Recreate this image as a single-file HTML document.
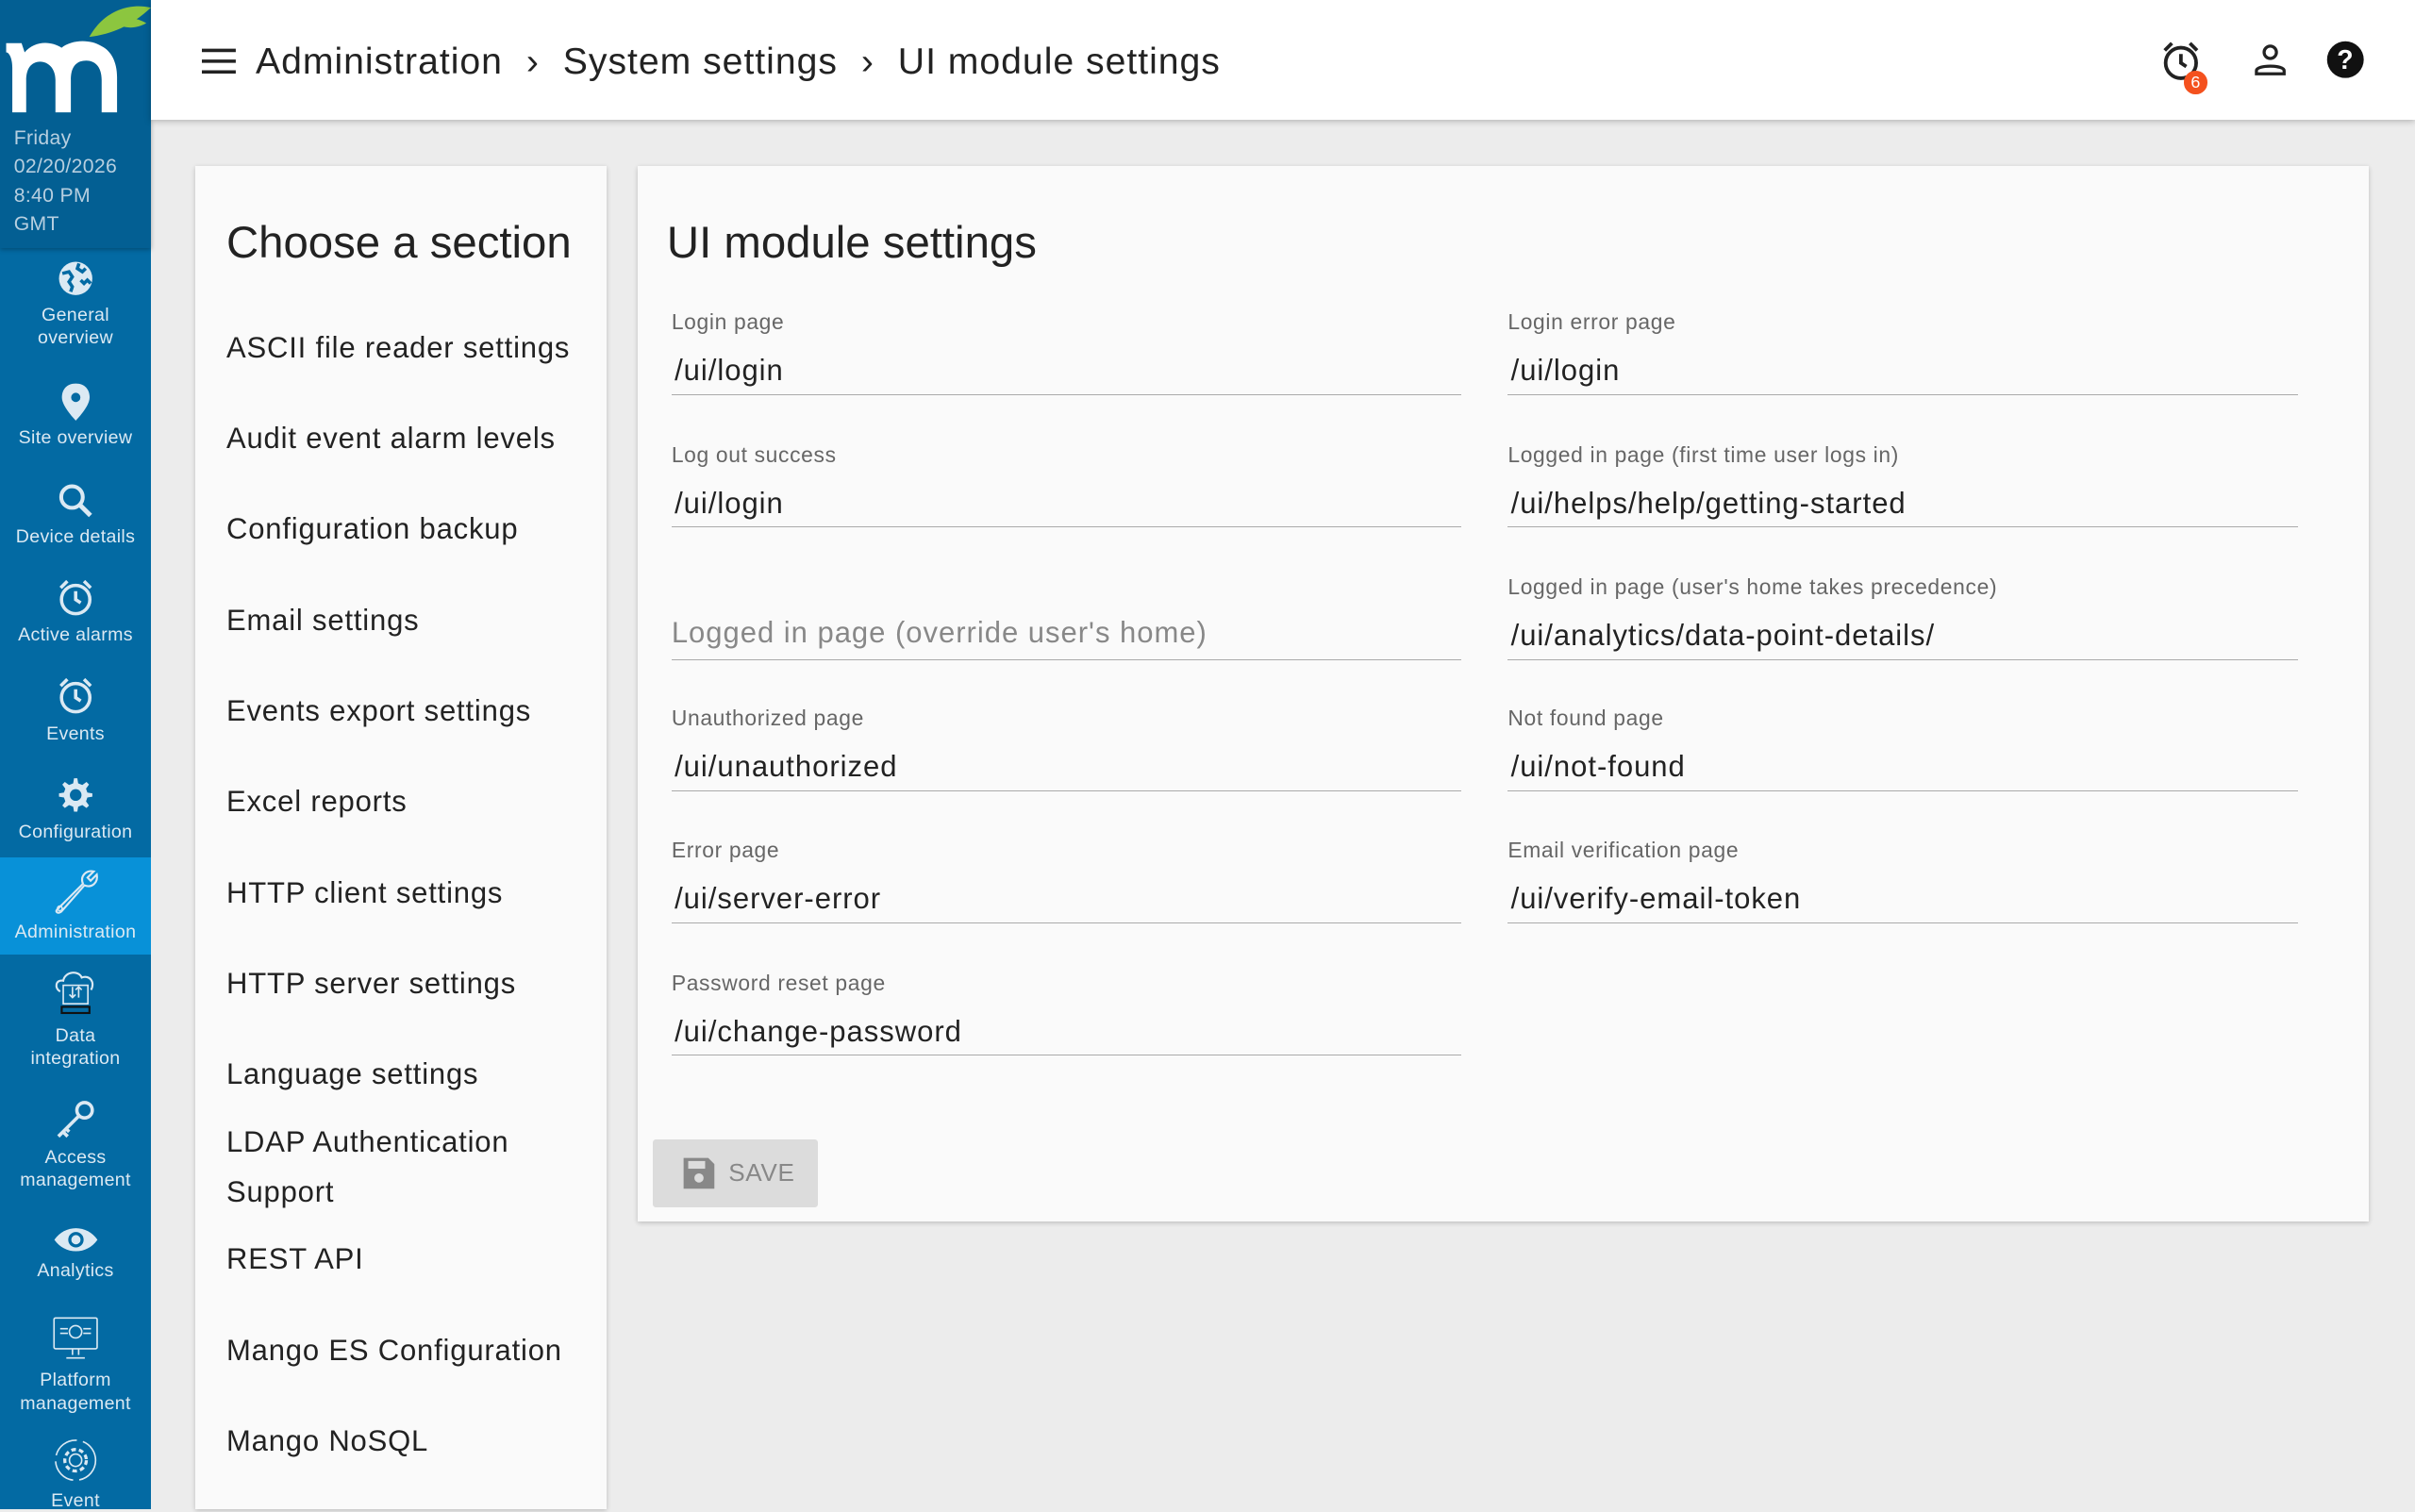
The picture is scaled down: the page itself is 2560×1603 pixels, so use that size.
<!DOCTYPE html>
<html><head><meta charset="utf-8"><style>
html{zoom:1.63265}
body{margin:0;width:1568px;height:980px;overflow:hidden;background:#ececec;font-family:"Liberation Sans",sans-serif;position:relative;color:#222;letter-spacing:.4px}
.sb{position:absolute;left:0;top:0;width:98px;height:980px;background:#036aa3;color:#dbe9f3;letter-spacing:.2px}
.sbtop{height:161px;background:#035f93;position:relative;box-shadow:0 1px 3px rgba(0,0,0,.3)}
.dt{position:absolute;left:9px;top:81px;font-size:13px;line-height:18.5px;color:#b7cfe0}
.it{position:absolute;left:0;width:98px;text-align:center;font-size:12px;line-height:15px}
.it svg{display:block;margin:0 auto 3px}
.act{background:#0891d8}
.hdr{position:absolute;left:98px;top:0;right:0;height:78px;background:#fff;box-shadow:0 1px 4px rgba(0,0,0,.25)}
.crumb{position:absolute;left:68px;top:27px;font-size:24px;color:#222;letter-spacing:.6px}
.left{position:absolute;left:127px;top:108px;width:267px;height:872px;background:#fafafa;box-shadow:0 1px 3px rgba(0,0,0,.2)}
.left h2{font-weight:normal;font-size:29px;margin:0;position:absolute;left:20px;top:33px;letter-spacing:0}
.left .l{position:absolute;left:20px;font-size:19px;line-height:32px;letter-spacing:.5px}
.main{position:absolute;left:414px;top:108px;width:1124px;height:685px;background:#fafafa;box-shadow:0 1px 3px rgba(0,0,0,.2)}
.main h2{font-weight:normal;font-size:29px;margin:0;position:absolute;left:19px;top:33px;letter-spacing:0}
.f{position:absolute;width:513px;border-bottom:1px solid #aaa;height:55px}
.f .lb{position:absolute;left:0;top:0;font-size:14px;color:#666}
.f .v{position:absolute;left:2px;top:29px;font-size:19px;color:#222;letter-spacing:.6px}
.f .ph{position:absolute;left:0;top:29px;font-size:19px;color:#888;letter-spacing:.6px}
.save{position:absolute;left:10px;top:632px;width:107px;height:44px;background:#dcdcdc;color:#888;font-size:16px;line-height:44px;border-radius:2px}
</style></head><body>
<div class="sb">
 <div class="sbtop">
  <svg width="98" height="80" style="position:absolute;left:0;top:0">
   <path d="M98 5 C85 2 68 6 58 24 C74 22 86 16 98 5Z" fill="#8cc63f"/>
   <path d="M74 14 C82 10 90 12 95 15 C88 19 80 19 74 14Z" fill="#8cc63f"/>
   <path d="M4 28 L14 28 L16 34 C22 27 32 26 40 31 C46 26 58 25 66 30 C72 33 76 40 76 50 L76 73 L66 73 L66 52 C66 40 58 38 52 40 C47 42 46 47 46 52 L46 73 L36 73 L36 52 C36 42 28 38 22 41 C18 43 17 48 17 52 L17 73 L8 73 L8 44 C8 38 6 34 4 34Z" fill="#fff"/>
  </svg>
  <div class="dt">Friday<br>02/20/2026<br>8:40 PM<br>GMT</div>
 </div>
 <div class="it" style="top:168px"><svg width="26" height="26" viewBox="0 0 24 24"><circle cx="12" cy="12" r="10" fill="#dbe9f3"/><path d="M4 9 L8 8 L10 11 L8 14 L10 17 L9 20 M14 3 L13 6 L16 8 L18 6 M15 13 L17 15 L19 13 L21 15" stroke="#036aa3" stroke-width="2" fill="none"/></svg>General<br>overview</div>
 <div class="it" style="top:248px"><svg width="20" height="26" viewBox="0 0 20 26"><path d="M10 1 C4 1 1 5 1 10 C1 16 10 25 10 25 C10 25 19 16 19 10 C19 5 16 1 10 1Z" fill="#dbe9f3"/><circle cx="10" cy="10" r="3" fill="#036aa3"/></svg>Site overview</div>
 <div class="it" style="top:312px"><svg width="24" height="26" viewBox="0 0 24 24"><circle cx="10" cy="10" r="7" stroke="#dbe9f3" stroke-width="2.5" fill="none"/><path d="M15 15 L22 22" stroke="#dbe9f3" stroke-width="3"/></svg>Device details</div>
 <div class="it" style="top:374px"><svg width="26" height="28" viewBox="0 0 24 24"><circle cx="12" cy="13" r="8.5" stroke="#dbe9f3" stroke-width="2" fill="none"/><path d="M12 8 V13 L15 15 M3 6 L7 2 M21 6 L17 2" stroke="#dbe9f3" stroke-width="2" fill="none"/></svg>Active alarms</div>
 <div class="it" style="top:438px"><svg width="26" height="28" viewBox="0 0 24 24"><circle cx="12" cy="13" r="8.5" stroke="#dbe9f3" stroke-width="2" fill="none"/><path d="M12 8 V13 L15 15 M3 6 L7 2 M21 6 L17 2" stroke="#dbe9f3" stroke-width="2" fill="none"/></svg>Events</div>
 <div class="it" style="top:502px"><svg width="26" height="28" viewBox="0 0 24 24"><path d="M12 2 L14 2 L14.5 5 L17 6 L19.5 4.2 L21 5.7 L19.2 8.2 L20 10.5 L23 11 L23 13 L20 13.5 L19.2 15.8 L21 18.3 L19.5 19.8 L17 18 L14.5 19 L14 22 L12 22 L11.5 19 L9 18 L6.5 19.8 L5 18.3 L6.8 15.8 L6 13.5 L3 13 L3 11 L6 10.5 L6.8 8.2 L5 5.7 L6.5 4.2 L9 6 L11.5 5Z" fill="#dbe9f3" transform="translate(-1 0)"/><circle cx="12" cy="12" r="3.5" fill="#036aa3"/></svg>Configuration</div>
 <div class="it act" style="top:557px;height:63px;padding-top:6px;box-sizing:border-box"><svg width="34" height="32" viewBox="0 0 34 32"><path d="M6 27 L22 11 C20 6 24 2 29 3 L25 7 L27 9 L31 5 C32 10 28 14 23 12 L8 29 C6 31 3 29 6 27Z" stroke="#dbe9f3" stroke-width="1.3" fill="none"/><circle cx="7" cy="27" r="1.5" stroke="#dbe9f3" fill="none"/></svg>Administration</div>
 <div class="it" style="top:628px"><svg width="32" height="34" viewBox="0 0 32 34"><path d="M6 16 C2 14 3 8 8 9 C9 3 18 2 20 7 C25 5 29 10 26 15" stroke="#dbe9f3" stroke-width="1.3" fill="none"/><rect x="8" y="12" width="16" height="12" stroke="#dbe9f3" fill="none"/><path d="M14 13 V20 M12 18 L14 20 L16 18 M18 20 V13 M16 15 L18 13 L20 15" stroke="#dbe9f3" fill="none"/><rect x="7" y="26" width="18" height="4" stroke="#111" stroke-width="1.3" fill="none"/></svg>Data<br>integration</div>
 <div class="it" style="top:713px"><svg width="28" height="28" viewBox="0 0 28 28"><circle cx="20" cy="8" r="5" stroke="#dbe9f3" stroke-width="2.2" fill="none"/><path d="M16 12 L3 25 M6 22 L9 25 M8 20 L10 22" stroke="#dbe9f3" stroke-width="2.2"/></svg>Access<br>management</div>
 <div class="it" style="top:795px"><svg width="30" height="20" viewBox="0 0 30 20"><path d="M1 10 C8 0 22 0 29 10 C22 20 8 20 1 10Z" fill="#dbe9f3"/><circle cx="15" cy="10" r="5" fill="#036aa3"/><circle cx="15" cy="10" r="3" fill="#dbe9f3"/></svg>Analytics</div>
 <div class="it" style="top:854px"><svg width="32" height="32" viewBox="0 0 32 32"><rect x="2" y="2" width="28" height="20" rx="1" stroke="#dbe9f3" fill="none"/><circle cx="16" cy="11" r="4" stroke="#dbe9f3" fill="none"/><path d="M6 9 H11 M6 12 H11 M21 9 H26 M21 12 H26 M14 22 V26 M18 22 V26 M10 28 H22" stroke="#dbe9f3"/></svg>Platform<br>management</div>
 <div class="it" style="top:932px"><svg width="32" height="32" viewBox="0 0 32 32"><circle cx="16" cy="16" r="13" stroke="#dbe9f3" stroke-dasharray="18 4" fill="none"/><circle cx="16" cy="16" r="7" stroke="#dbe9f3" stroke-width="2" stroke-dasharray="3 2" fill="none"/><circle cx="16" cy="16" r="4" stroke="#dbe9f3" fill="none"/></svg>Event</div>
</div>

<div class="hdr">
 <svg style="position:absolute;left:33px;top:31px" width="22" height="17"><path d="M0 1.5H22M0 8.5H22M0 15.5H22" stroke="#222" stroke-width="2.2"/></svg>
 <div class="crumb">Administration <span style="margin:0 8px">›</span> System settings <span style="margin:0 8px">›</span> UI module settings</div>
 <svg style="position:absolute;left:1304px;top:26px" width="28" height="28" viewBox="0 0 24 24"><circle cx="12" cy="13" r="8.5" stroke="#222" stroke-width="2" fill="none"/><path d="M12 8 V13 L15 15 M3 6 L7 2 M21 6 L17 2" stroke="#222" stroke-width="2" fill="none"/></svg>
 <div style="position:absolute;left:1320px;top:46px;width:15px;height:15px;border-radius:50%;background:#f4511e;color:#fff;font-size:11px;text-align:center;line-height:15px;letter-spacing:0">6</div>
 <svg style="position:absolute;left:1364px;top:27px" width="24" height="24" viewBox="0 0 24 24"><circle cx="12" cy="7" r="4" stroke="#222" stroke-width="2" fill="none"/><path d="M3 21 V19 C3 15 21 15 21 19 V21Z" stroke="#222" stroke-width="2" fill="none"/></svg>
 <svg style="position:absolute;left:1412px;top:26px" width="26" height="26" viewBox="0 0 24 24"><circle cx="12" cy="12" r="11" fill="#111"/><text x="12" y="17.5" font-size="16" font-weight="bold" fill="#fff" text-anchor="middle" font-family="Liberation Sans">?</text></svg>
</div>

<div class="left">
 <h2>Choose a section</h2>
 <div class="l" style="top:102px">ASCII file reader settings</div>
 <div class="l" style="top:161px">Audit event alarm levels</div>
 <div class="l" style="top:220px">Configuration backup</div>
 <div class="l" style="top:279px">Email settings</div>
 <div class="l" style="top:338px">Events export settings</div>
 <div class="l" style="top:397px">Excel reports</div>
 <div class="l" style="top:456px">HTTP client settings</div>
 <div class="l" style="top:515px">HTTP server settings</div>
 <div class="l" style="top:574px">Language settings</div>
 <div class="l" style="top:618px">LDAP Authentication<br>Support</div>
 <div class="l" style="top:694px">REST API</div>
 <div class="l" style="top:753px">Mango ES Configuration</div>
 <div class="l" style="top:812px">Mango NoSQL</div>
</div>

<div class="main">
 <h2>UI module settings</h2>
 <div class="f" style="left:22px;top:93px"><div class="lb">Login page</div><div class="v">/ui/login</div></div>
 <div class="f" style="left:565px;top:93px"><div class="lb">Login error page</div><div class="v">/ui/login</div></div>
 <div class="f" style="left:22px;top:179px"><div class="lb">Log out success</div><div class="v">/ui/login</div></div>
 <div class="f" style="left:565px;top:179px"><div class="lb">Logged in page (first time user logs in)</div><div class="v">/ui/helps/help/getting-started</div></div>
 <div class="f" style="left:22px;top:265px"><div class="ph" style="top:27px">Logged in page (override user's home)</div></div>
 <div class="f" style="left:565px;top:265px"><div class="lb">Logged in page (user's home takes precedence)</div><div class="v">/ui/analytics/data-point-details/</div></div>
 <div class="f" style="left:22px;top:350px"><div class="lb">Unauthorized page</div><div class="v">/ui/unauthorized</div></div>
 <div class="f" style="left:565px;top:350px"><div class="lb">Not found page</div><div class="v">/ui/not-found</div></div>
 <div class="f" style="left:22px;top:436px"><div class="lb">Error page</div><div class="v">/ui/server-error</div></div>
 <div class="f" style="left:565px;top:436px"><div class="lb">Email verification page</div><div class="v">/ui/verify-email-token</div></div>
 <div class="f" style="left:22px;top:522px"><div class="lb">Password reset page</div><div class="v">/ui/change-password</div></div>
 <div class="save"><svg style="position:absolute;left:19px;top:11px" width="22" height="22" viewBox="0 0 22 22"><path d="M1 1 H17 L21 5 V21 H1Z" fill="#888"/><rect x="4" y="3" width="11" height="5" fill="#dcdcdc"/><circle cx="11" cy="14" r="3" fill="#dcdcdc"/></svg><span style="position:absolute;left:49px">SAVE</span></div>
</div>
</body></html>
